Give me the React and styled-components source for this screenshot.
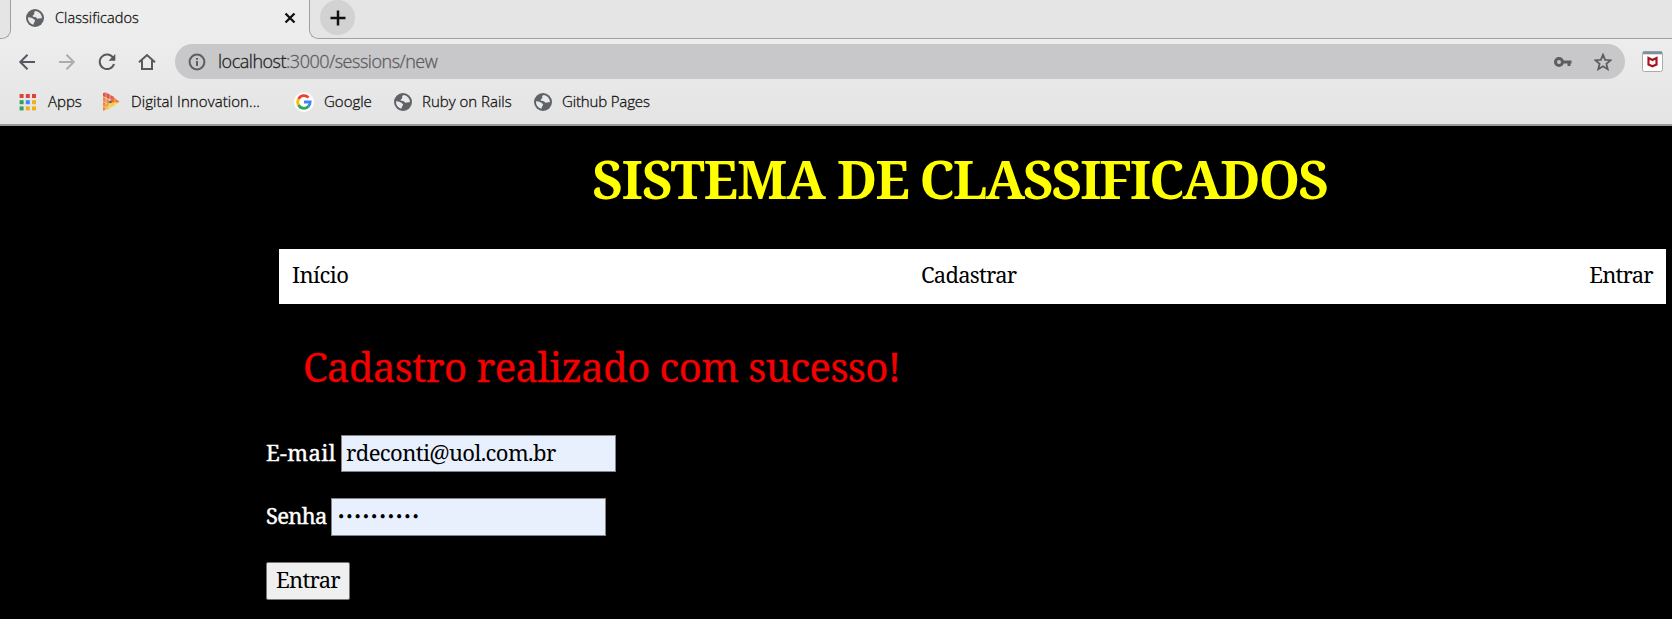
import React from 'react';
import styled, { createGlobalStyle } from 'styled-components';

const serif = '"Noto Serif", "DejaVu Serif Condensed", "DejaVu Serif", serif';

const GlobalStyle = createGlobalStyle`
  * { box-sizing: border-box; }
  body { margin: 0; background: #000; }
`;

const Window = styled.div`
  display: flex;
  flex-direction: column;
  width: 1672px;
  height: 619px;
  overflow: hidden;
  background: #000;
`;

const Chrome = styled.header`
  display: flex;
  flex-direction: column;
  height: 126px;
  flex: none;
  background: linear-gradient(#ededed 38px, #e4e4e4);
  border-bottom: 2px solid #989898;
  font-family: "Open Sans", "Noto Sans", sans-serif;
  font-weight: 300;
  -webkit-text-stroke: 0.3px;
  color: #111;
`;

const TabStrip = styled.div`
  display: flex;
  height: 39px;
`;

const StripEdge = styled.div`
  width: ${(p) => (p.$fill ? 'auto' : '11px')};
  flex: ${(p) => (p.$fill ? 1 : 'none')};
  background: #e5e5e5;
  border: 0 solid #a0a0a0;
  border-bottom-width: 1px;
  border-${(p) => (p.$fill ? 'left' : 'right')}-width: 1px;
  border-bottom-${(p) => (p.$fill ? 'left' : 'right')}-radius: 9px;
  padding: 0 0 0 ${(p) => (p.$fill ? '10px' : '0')};
`;

const Tab = styled.div`
  display: flex;
  align-items: center;
  width: 298px;
  padding: 0 10px 3px 15px;
  font-size: 14.5px;
  letter-spacing: 0.08px;
`;

const TabTitle = styled.span`
  flex: 1;
  margin-left: 11px;
  padding-bottom: 2px;
`;

const NewTab = styled.div`
  display: flex;
  align-items: center;
  justify-content: center;
  width: 35px;
  height: 35px;
  border-radius: 50%;
  background: #d2d2d2;
`;

const Toolbar = styled.div`
  display: flex;
  align-items: center;
  height: 45px;
  padding: 0 9px 0 15px;
`;

const NavButton = styled.span`
  display: flex;
  justify-content: center;
  flex: none;
  width: 24px;
  margin-right: 16px;
  color: ${(p) => (p.$disabled ? '#acacac' : '#55585c')};
`;

const AddressBar = styled.div`
  display: flex;
  align-items: center;
  flex: none;
  width: 1450px;
  height: 35px;
  padding: 0 13px;
  border-radius: 18px;
  background: #c8c8ca;
  color: #5c5e61;
`;

const Address = styled.span`
  flex: 1;
  margin-left: 12px;
  padding-bottom: 1px;
  font-size: 18px;
  letter-spacing: -0.48px;
  color: #5a5b5e;
`;

const Host = styled.span`
  color: #222;
`;

const AddressActions = styled.span`
  display: flex;
  align-items: center;
  gap: 22px;
`;

const Shield = styled.div`
  display: flex;
  margin-left: 17px;
`;

const Bookmarks = styled.nav`
  display: flex;
  align-items: center;
  height: 36px;
  padding-left: 19px;
`;

const Bookmark = styled.span`
  display: flex;
  align-items: center;
  gap: ${(p) => p.$gap || 11}px;
  width: ${(p) => p.$width}px;
  white-space: nowrap;
  font-size: 15px;
  letter-spacing: ${(p) => p.$track || 0}px;
`;

const BookmarkName = styled.span`
  padding-bottom: 2px;
`;

const Page = styled.main`
  padding: 0 6px 0 266px;
  font-family: ${serif};
  font-size: 22px;
`;

const Title = styled.h1`
  margin: 22px 0 0;
  height: 62px;
  padding-right: 13px;
  line-height: 62px;
  text-align: center;
  white-space: nowrap;
  font-family: ${serif};
  font-size: 52.5px;
  letter-spacing: -1.55px;
  color: #ff0;
`;

const TitleLead = styled.span`
  letter-spacing: -0.9px;
`;

const TitleRest = styled.span`
  letter-spacing: -1.85px;
`;

const Menu = styled.nav`
  display: flex;
  align-items: center;
  justify-content: space-between;
  height: 55px;
  margin: 39px 0 0 13px;
  padding: 0 13px 5px;
  background: #fff;
  color: #000;
`;

const MenuLink = styled.span`
  letter-spacing: ${(p) => p.$track || 0}px;
`;

const Notice = styled.p`
  margin: 35px 0 0 37px;
  height: 56px;
  line-height: 56px;
  font-size: 40px;
  letter-spacing: -0.58px;
  color: #f50000;
  -webkit-text-stroke: 0.3px #f50000;
`;

const Form = styled.form`
  display: flex;
  flex-direction: column;
  align-items: flex-start;
  gap: 26px;
  margin-top: 40px;
`;

const Field = styled.label`
  display: flex;
  align-items: center;
  height: ${(p) => p.$height}px;
  color: #fff;
  -webkit-text-stroke: 0.4px #fff;
`;

const FieldName = styled.span`
  width: ${(p) => p.$width}px;
  letter-spacing: ${(p) => p.$track}px;
  padding-bottom: 4px;
`;

const Input = styled.input`
  width: 275px;
  height: 100%;
  padding: 0 4px 4px;
  border: 1px solid #858585;
  background: #e8f0fe;
  color: #000;
  font: 22px ${serif};
  letter-spacing: -0.6px;
  -webkit-text-stroke: 0;
  outline: none;

  &[type='password'] {
    padding: 0 4px 0 5px;
    font: 15.6px "DejaVu Serif Condensed", "DejaVu Serif", serif;
    letter-spacing: 0;
  }
`;

const Submit = styled.button`
  width: 84px;
  height: 38px;
  padding: 0 0 5px;
  border: 1px solid #767676;
  border-radius: 2px;
  background: #efefef;
  color: #000;
  font: 22px ${serif};
  letter-spacing: -0.75px;
`;

const Globe = () => (
  <svg width="18" height="18" viewBox="0 0 18 18">
    <circle cx="9" cy="9" r="9" fill="#5f6368" />
    <path d="M9.6 1.9 C7.8 3 7.5 4.2 8.7 4.8 C7.4 5.2 7.6 6.7 6.3 7.1 C7.5 8.4 9.7 7.7 10.9 9.3 C12 10.5 12.7 9.1 15.9 9.4 A7.1 7.1 0 0 0 9.6 1.9Z M2 8.2 C4.2 8 5.9 8.8 7.4 9.8 C8.5 10.9 9.4 11.1 9.1 12 C8.2 13 7.9 13.5 7.4 15.8 A7.1 7.1 0 0 1 2 8.2Z" fill="#e9e9e9" />
  </svg>
);

const Line = ({ children, size = 18, w = 2 }) => (
  <svg width={size} height={size} viewBox="0 0 18 18" fill="none" stroke="currentColor" strokeWidth={w}>{children}</svg>
);

const Apps = () => (
  <svg width="18" height="18" viewBox="0 0 18 18">
    {['#db4437', '#db4437', '#db4437', '#35a05a', '#4285f4', '#efb01b', '#35a05a', '#efb01b', '#efb01b'].map((fill, i) => (
      <rect key={i} x={0.6 + (i % 3) * 6.2} y={1 + Math.floor(i / 3) * 6.2} width="4" height="4" fill={fill} />
    ))}
  </svg>
);

const Innovation = () => (
  <svg width="18" height="20" viewBox="0 0 18 20">
    <path d="M1 1L4 0.5L12 5 8 8 1 5Z" fill="#dc5548" />
    <path d="M1 5L7 8V12L5 17L1 19Z" fill="#f08a3c" />
    <path d="M11 4.5L17.5 10 11 13 7 10Z" fill="#e8703c" />
    <path d="M17.5 10L5 18V14L10 10.5Z" fill="#f7cf3c" />
    <path d="M0 4L9 8M0 9L6 12M0 14L5 16M4 1V18M8 3V16M13 5V14" stroke="#f1e0cc" strokeWidth=".6" />
    <circle cx="8.3" cy="10" r="1.3" fill="#6a5b66" />
  </svg>
);

const Google = () => (
  <svg width="20" height="20" viewBox="0 0 20 20">
    <circle cx="10" cy="10" r="10" fill="#fff" />
    <g fill="none" strokeWidth="2.8">
      <path d="M4.5 7A6.2 6.2 0 0 1 14.5 5.6" stroke="#ea4335" />
      <path d="M4.5 13A6.2 6.2 0 0 1 4.5 7" stroke="#fbbc05" />
      <path d="M14.3 14.5A6.2 6.2 0 0 1 4.5 13" stroke="#34a853" />
      <path d="M10 10H16.2A6.2 6.2 0 0 1 14.1 14.6" stroke="#4285f4" />
    </g>
  </svg>
);

export default function App() {
  return (
    <Window>
      <GlobalStyle />
      <Chrome>
        <TabStrip>
          <StripEdge />
          <Tab>
            <Globe />
            <TabTitle>Classificados</TabTitle>
            <Line w={2.3}><path d="M4.5 4.5L13.5 13.5M13.5 4.5L4.5 13.5" stroke="#111" /></Line>
          </Tab>
          <StripEdge $fill>
            <NewTab><Line w={2.5}><path d="M9 1.5V16.5M1.5 9H16.5" stroke="#111" /></Line></NewTab>
          </StripEdge>
        </TabStrip>
        <Toolbar>
          <NavButton><Line><path d="M17 9H2.5M9.5 1.8L2.3 9L9.5 16.2" /></Line></NavButton>
          <NavButton $disabled><Line><path d="M1 9H15.5M8.5 1.8L15.7 9L8.5 16.2" /></Line></NavButton>
          <NavButton><Line><path d="M15.3 5A7.3 7.3 0 1 0 16 11" /><path d="M17.3 1V7.8H10.5Z" fill="currentColor" stroke="none" /></Line></NavButton>
          <NavButton><Line><path d="M1 9.3L9 2L17 9.3M4 7.5V16H14V7.5" /></Line></NavButton>
          <AddressBar>
            <Line><circle cx="9" cy="9" r="7.4" /><path d="M9 8V13M9 5V6.8" /></Line>
            <Address><Host>localhost</Host>:3000/sessions/new</Address>
            <AddressActions>
              <Line><path d="M8 9H17.5M15 9V13" strokeWidth="3" /><circle cx="5" cy="9" r="3.5" strokeWidth="3" /></Line>
              <Line w={1.8}><path d="M9 1.7L11.1 6.8L16.6 7.2L12.4 10.8L13.7 16.2L9 13.3L4.3 16.2L5.6 10.8L1.4 7.2L6.9 6.8Z" /></Line>
            </AddressActions>
          </AddressBar>
          <Shield>
            <svg width="21" height="21" viewBox="0 0 21 21">
              <rect x=".5" y=".5" width="20" height="20" rx="2" fill="#fff" stroke="#aaa" />
              <path d="M1 .5H20V3.3H1Z" fill="#78949b" />
              <path d="M6.5 7L10.5 9L14.5 7V13.5L10.5 15.3L6.5 13.5Z" fill="none" stroke="#a81620" strokeWidth="2.2" />
            </svg>
          </Shield>
        </Toolbar>
        <Bookmarks>
          <Bookmark $width={83}><Apps /><BookmarkName>Apps</BookmarkName></Bookmark>
          <Bookmark $width={192} $track={0.08}><Innovation /><BookmarkName>Digital Innovation...</BookmarkName></Bookmark>
          <Bookmark $width={100} $gap={10}><Google /><BookmarkName>Google</BookmarkName></Bookmark>
          <Bookmark $width={140} $gap={10}><Globe /><BookmarkName>Ruby on Rails</BookmarkName></Bookmark>
          <Bookmark $width={140} $gap={10} $track={-0.15}><Globe /><BookmarkName>Github Pages</BookmarkName></Bookmark>
        </Bookmarks>
      </Chrome>
      <Page>
        <Title><TitleLead>SISTEMA</TitleLead> <TitleRest>DE CLASSIFICADOS</TitleRest></Title>
        <Menu>
          <MenuLink $track={-0.6}>Início</MenuLink>
          <MenuLink $track={-0.75}>Cadastrar</MenuLink>
          <MenuLink $track={-0.75}>Entrar</MenuLink>
        </Menu>
        <Notice>Cadastro realizado com sucesso!</Notice>
        <Form>
          <Field $height={37}>
            <FieldName $width={75} $track={0.4}>E-mail</FieldName>
            <Input defaultValue="rdeconti@uol.com.br" />
          </Field>
          <Field $height={38}>
            <FieldName $width={65} $track={-0.75}>Senha</FieldName>
            <Input type="password" defaultValue="abcdefghij" />
          </Field>
          <Submit type="button">Entrar</Submit>
        </Form>
      </Page>
    </Window>
  );
}
